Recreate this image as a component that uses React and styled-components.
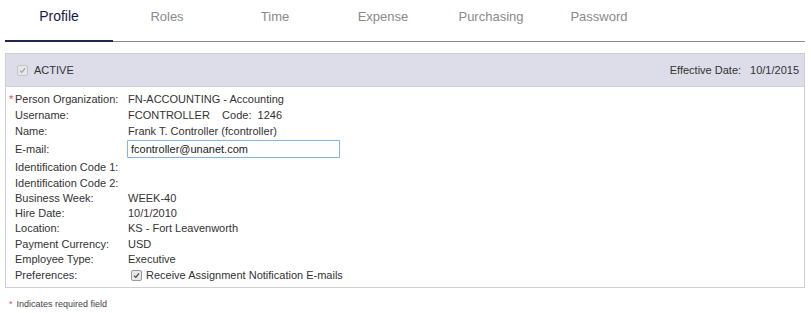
import React from 'react';
import styled, { createGlobalStyle } from 'styled-components';

const GlobalStyle = createGlobalStyle`
  body {
    margin: 0;
    background: #fff;
    font-family: "Liberation Sans", Arial, sans-serif;
    color: #333;
  }
`;

const Page = styled.div`
  width: 800px;
  padding-left: 5px;
`;

const TabBar = styled.div`
  display: flex;
  height: 41px;
  border-bottom: 1px solid #8a8a8a;
`;

const Tab = styled.div`
  width: 108px;
  height: 42px;
  box-sizing: border-box;
  padding-top: ${(p) => (p.$active ? 8 : 9)}px;
  text-align: center;
  font-size: ${(p) => (p.$active ? 14 : 13)}px;
  color: ${(p) => (p.$active ? '#17193f' : '#8a8a8a')};
  border-bottom: 2px solid ${(p) => (p.$active ? '#22264f' : 'transparent')};
  margin-bottom: -1px;
`;

const Panel = styled.div`
  margin-top: 11px;
  border: 1px solid #cfcfcf;
  height: 235px;
  box-sizing: border-box;
`;

const PanelHeader = styled.div`
  display: flex;
  align-items: center;
  justify-content: space-between;
  height: 32px;
  padding: 0 5px 0 11px;
  background: #dcdde9;
  border-bottom: 1px solid #d0d0d8;
  font-size: 11px;
  color: #333;
`;

const Status = styled.label`
  display: flex;
  align-items: center;
  gap: 6px;
`;

const Box = styled.span`
  display: inline-flex;
  align-items: center;
  justify-content: center;
  width: 9px;
  height: 9px;
  border: 1px solid ${(p) => (p.$disabled ? '#c4c4c4' : '#9a9a9a')};
  border-radius: 2px;
  background: ${(p) => (p.$disabled ? '#e6e6ea' : '#e8e8e8')};
  box-sizing: content-box;
`;

const DateLabel = styled.span`
  margin-right: 9px;
`;

const Fields = styled.div`
  display: grid;
  grid-template-columns: 119px 1fr;
  padding: 4px 0 0 3px;
  font-size: 11px;
  color: #333;
`;

const Label = styled.div`
  display: flex;
  align-items: center;
  padding-left: 6px;
  height: ${(p) => p.$h}px;
`;

const Value = styled.div`
  display: flex;
  align-items: center;
  white-space: pre;
  height: ${(p) => p.$h}px;
`;

const Star = styled.span`
  color: #e0406a;
  margin-left: -6px;
  width: 6px;
`;

const EmailInput = styled.input`
  width: 213px;
  height: 18px;
  box-sizing: border-box;
  margin-left: -1px;
  padding: 0 3px;
  border: 1px solid #86b3e2;
  border-radius: 1px;
  box-shadow: 0 0 1px #c4dcf4;
  font-family: "Liberation Sans", Arial, sans-serif;
  font-size: 11px;
  color: #222;
  outline: none;
`;

const CheckLabel = styled.label`
  display: flex;
  align-items: center;
  gap: 4px;
  padding-left: 3px;
`;

const Footnote = styled.div`
  margin-top: 11px;
  padding-left: 4px;
  font-size: 9px;
  color: #444;
  span {
    color: #e0406a;
    margin-right: 4px;
  }
`;

const Tick = ({ color }) => (
  <svg width="7" height="7" viewBox="0 0 7 7">
    <path d="M1 3.6 L2.8 5.4 L6 1.4" fill="none" stroke={color} strokeWidth="1.3" />
  </svg>
);

const tabs = ['Profile', 'Roles', 'Time', 'Expense', 'Purchasing', 'Password'];

const rows = [
  { h: 16, label: 'Person Organization:', value: 'FN-ACCOUNTING - Accounting', required: true },
  { h: 16, label: 'Username:', value: 'FCONTROLLER    Code:  1246' },
  { h: 16, label: 'Name:', value: 'Frank T. Controller (fcontroller)' },
  { h: 19, label: 'E-mail:', email: 'fcontroller@unanet.com' },
  { h: 17, label: 'Identification Code 1:', value: '' },
  { h: 15, label: 'Identification Code 2:', value: '' },
  { h: 15, label: 'Business Week:', value: 'WEEK-40' },
  { h: 15, label: 'Hire Date:', value: '10/1/2010' },
  { h: 16, label: 'Location:', value: 'KS - Fort Leavenworth' },
  { h: 15, label: 'Payment Currency:', value: 'USD' },
  { h: 16, label: 'Employee Type:', value: 'Executive' },
  { h: 16, label: 'Preferences:', check: 'Receive Assignment Notification E-mails' },
];

export default function App() {
  return (
    <Page>
      <GlobalStyle />
      <TabBar>
        {tabs.map((t) => (
          <Tab key={t} $active={t === 'Profile'}>
            {t}
          </Tab>
        ))}
      </TabBar>
      <Panel>
        <PanelHeader>
          <Status>
            <Box $disabled>
              <Tick color="#a0a0a8" />
            </Box>
            ACTIVE
          </Status>
          <span>
            <DateLabel>Effective Date:</DateLabel>10/1/2015
          </span>
        </PanelHeader>
        <Fields>
          {rows.map((r) => (
            <React.Fragment key={r.label}>
              <Label $h={r.h}>
                {r.required && <Star>*</Star>}
                {r.label}
              </Label>
              <Value $h={r.h}>
                {r.email && <EmailInput defaultValue={r.email} />}
                {r.check && (
                  <CheckLabel>
                    <Box>
                      <Tick color="#444" />
                    </Box>
                    {r.check}
                  </CheckLabel>
                )}
                {r.value}
              </Value>
            </React.Fragment>
          ))}
        </Fields>
      </Panel>
      <Footnote>
        <span>*</span>Indicates required field
      </Footnote>
    </Page>
  );
}
